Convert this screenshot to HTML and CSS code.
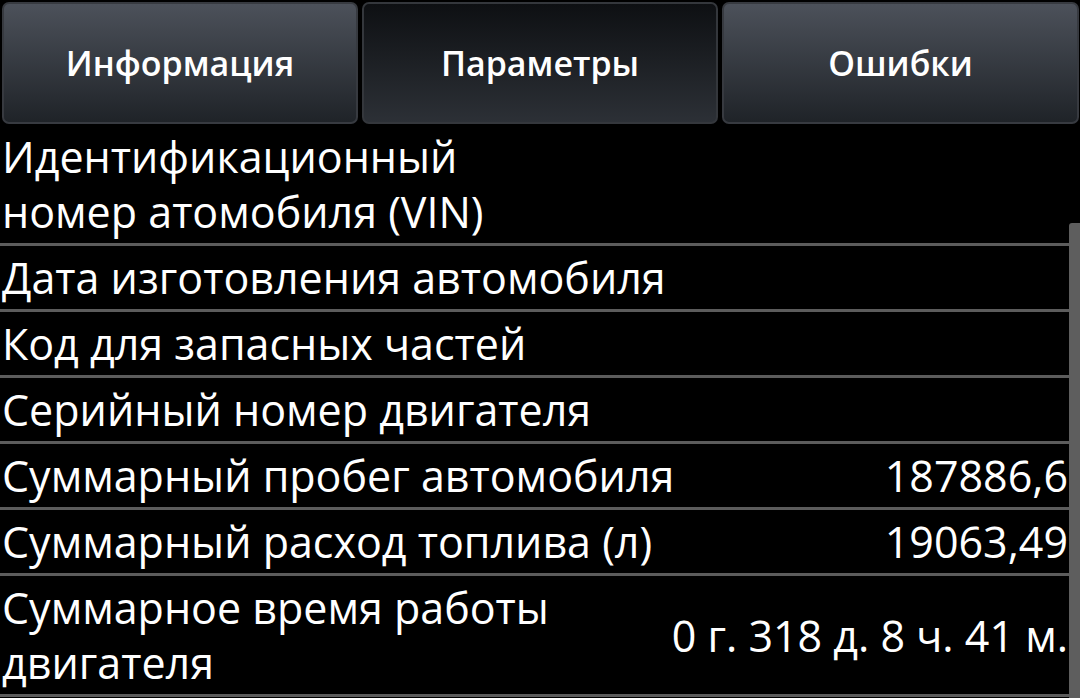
FILE: index.html
```html
<!DOCTYPE html>
<html lang="ru">
<head>
<meta charset="utf-8">
<link rel="stylesheet" href="styles.css">
</head>
<body>
<div class="screen">
  <div class="tabs">
    <div class="tab">Информация</div>
    <div class="tab tab-active">Параметры</div>
    <div class="tab">Ошибки</div>
  </div>
  <div class="list">
    <div class="row row-tall"><div class="label">Идентификационный<br>номер атомобиля (VIN)</div><div class="value"></div></div>
    <div class="row"><div class="label">Дата изготовления автомобиля</div><div class="value"></div></div>
    <div class="row"><div class="label">Код для запасных частей</div><div class="value"></div></div>
    <div class="row"><div class="label">Серийный номер двигателя</div><div class="value"></div></div>
    <div class="row"><div class="label">Суммарный пробег автомобиля</div><div class="value">187886,6</div></div>
    <div class="row"><div class="label">Суммарный расход топлива (л)</div><div class="value">19063,49</div></div>
    <div class="row row-tall"><div class="label">Суммарное время работы<br>двигателя</div><div class="value">0 г. 318 д. 8 ч. 41 м.</div></div>
    <div class="scrollbar"></div>
  </div>
</div>
</body>
</html>
```
FILE: styles.css
```css
* { box-sizing: border-box; }
html, body { margin: 0; padding: 0; background: #000; }
body { width: 1080px; height: 698px; overflow: hidden; font-family: "Open Sans", "Noto Sans", sans-serif; color: #fff; }
.screen { width: 1080px; height: 698px; display: flex; flex-direction: column; }
.tabs { display: grid; grid-template-columns: 356px 356px 357px; gap: 4px; padding: 2px 1px 0 2px; height: 125px; }
.tab {
  display: flex; align-items: center; justify-content: center;
  border: 2px solid #373a40; border-radius: 7px;
  background: linear-gradient(#4c515a, #1f2328);
  font-weight: 600; font-size: 34px;
  height: 122px;
}
.tab-active { background: linear-gradient(#0e1013, #2c3036); border-color: #34373c; }
.list { position: relative; flex: 1; }
.row {
  display: flex; align-items: center; justify-content: space-between;
  height: 66px; border-bottom: 3px solid #5c5c5c; padding: 0 12px 0 2px;
  font-size: 43px; line-height: 55px;
}
.row-tall { height: 121px; }
.row:last-of-type { height: 120px; }
.label { white-space: nowrap; }
.value { white-space: nowrap; text-align: right; }
.scrollbar { position: absolute; right: 0; top: 98px; bottom: 0; width: 11px; background: #5e5e5e; border-top-left-radius: 3px; }
```
